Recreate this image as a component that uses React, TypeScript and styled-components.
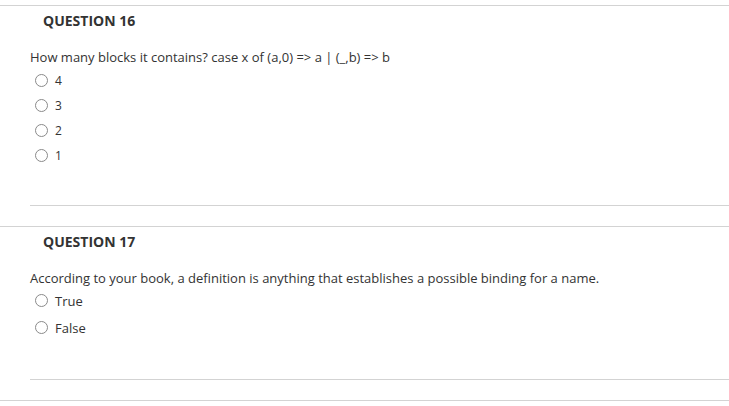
import React from "react";
import styled, { createGlobalStyle } from "styled-components";

const GlobalStyle = createGlobalStyle`
  html, body {
    margin: 0;
    padding: 0;
    background: #ffffff;
  }
  body {
    font-family: "Open Sans", "Noto Sans", sans-serif;
    color: #333333;
  }
`;

const Page = styled.div`
  width: 729px;
  padding-top: 5px;
  display: flex;
  flex-direction: column;
`;

const QuestionSection = styled.section`
  border-top: 1px solid #d3d3d3;
  display: flex;
  flex-direction: column;
  padding-bottom: 20px;
`;

const Title = styled.h2`
  margin: 5px 0 0 0;
  padding-left: 43px;
  font-size: 14px;
  line-height: 20px;
  font-weight: 700;
  color: #333333;
`;

const Prompt = styled.p<{ $gap: number }>`
  margin: ${(p) => p.$gap}px 0 0 0;
  padding-left: 30px;
  font-size: 13px;
  line-height: 18px;
  color: #333333;
`;

const OptionList = styled.ul<{ $top: number; $bottom: number }>`
  list-style: none;
  margin: ${(p) => p.$top}px 0 ${(p) => p.$bottom}px 0;
  padding: 0 0 0 35px;
  display: flex;
  flex-direction: column;
`;

const Option = styled.li<{ $h: number; $size: number }>`
  height: ${(p) => p.$h}px;
  display: flex;
  align-items: center;
  gap: 7px;
  font-size: ${(p) => p.$size}px;
  color: #333333;
`;

const Radio = styled.span`
  width: 13px;
  height: 13px;
  box-sizing: border-box;
  border: 1px solid #8a8a8a;
  border-radius: 50%;
  background: #ffffff;
  flex: none;
`;

const Divider = styled.hr`
  margin: 0 0 0 30px;
  border: none;
  border-top: 1px solid #d3d3d3;
  height: 0;
`;

type Q = {
  num: number;
  text: string;
  options: string[];
  rowH: number;
  labelSize: number;
  listTop: number;
  listBottom: number;
};

const questions: Q[] = [
  {
    num: 16,
    text: "How many blocks it contains? case x of (a,0) => a | (_,b) => b",
    options: ["4", "3", "2", "1"],
    rowH: 25,
    labelSize: 12,
    listTop: 2,
    listBottom: 37,
  },
  {
    num: 17,
    text:
      "According to your book, a definition is anything that establishes a possible binding for a name.",
    options: ["True", "False"],
    rowH: 27,
    labelSize: 13,
    listTop: 0,
    listBottom: 38,
  },
];

export default function App() {
  return (
    <>
      <GlobalStyle />
      <Page>
        {questions.map((q) => (
          <QuestionSection key={q.num}>
            <Title>QUESTION {q.num}</Title>
            <Prompt $gap={17}>{q.text}</Prompt>
            <OptionList $top={q.listTop} $bottom={q.listBottom}>
              {q.options.map((o) => (
                <Option key={o} $h={q.rowH} $size={q.labelSize}>
                  <Radio />
                  <span>{o}</span>
                </Option>
              ))}
            </OptionList>
            <Divider />
          </QuestionSection>
        ))}
        <QuestionSection />
      </Page>
    </>
  );
}
